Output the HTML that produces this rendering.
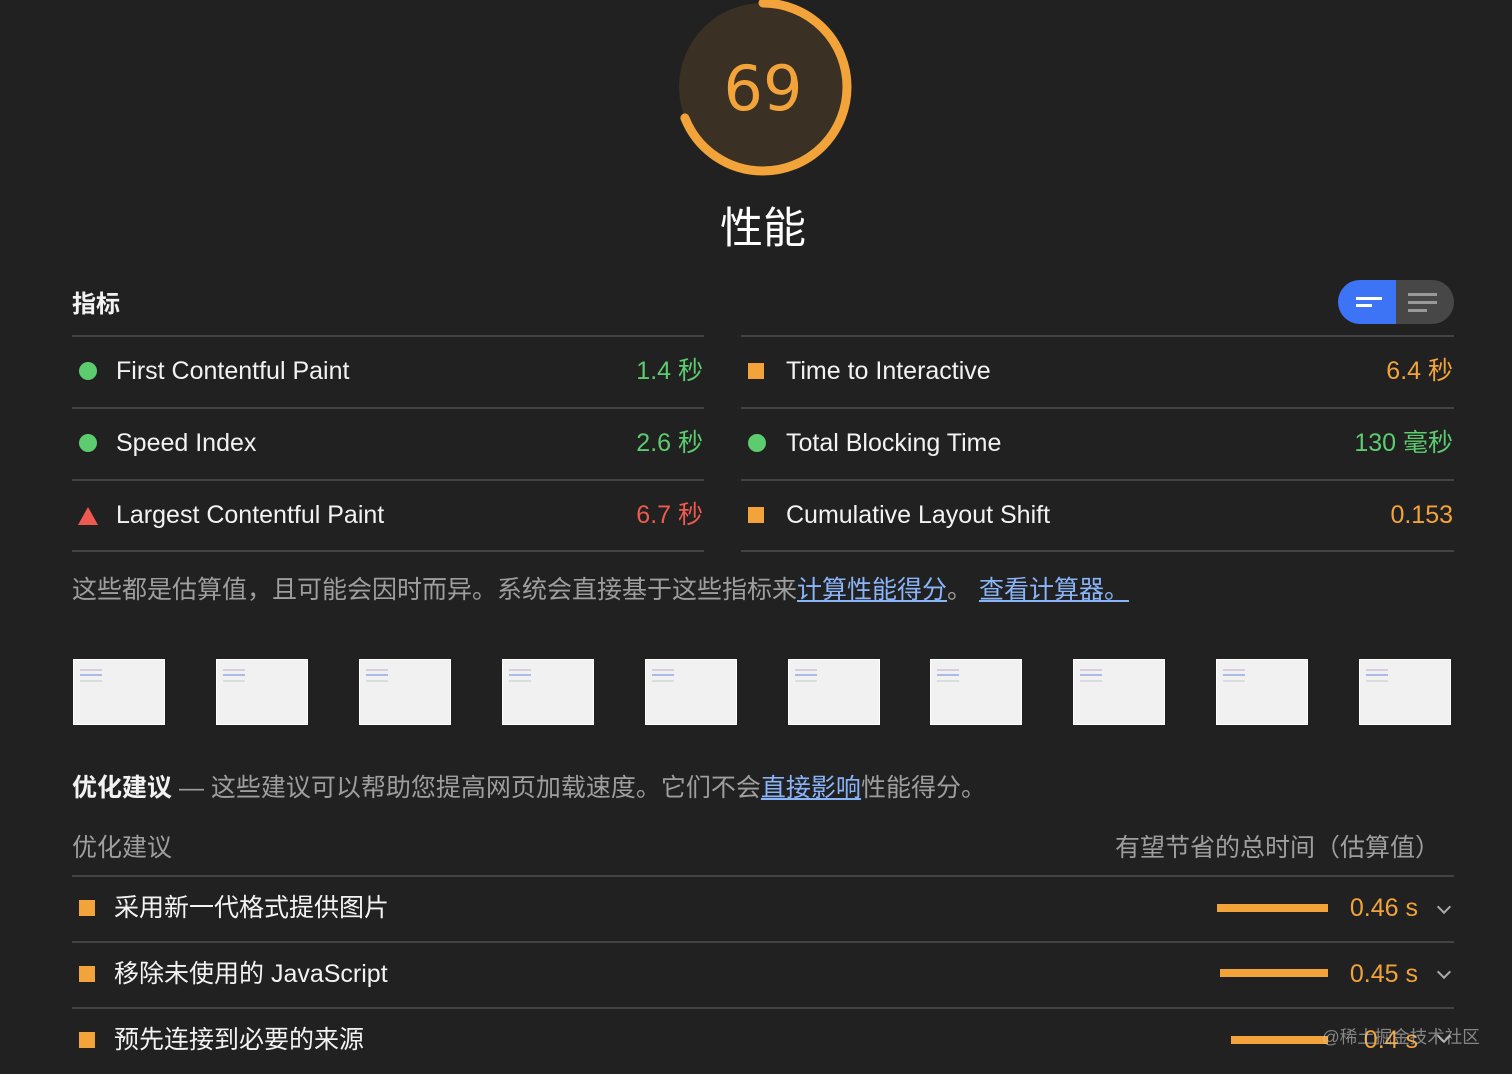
<!DOCTYPE html>
<html><head><meta charset="utf-8"><style>
body{margin:0;width:1512px;height:1074px;background:#212121;overflow:hidden;position:relative;font-family:"Liberation Sans","Noto Sans CJK SC",sans-serif;color:#e8e8e8}
.a{position:absolute;white-space:nowrap}
.hl{position:absolute;height:2px;background:#434343}
.m{font-size:25px;line-height:30px;color:#f2f2f2}
.v{font-size:25px;line-height:30px;text-align:right}
.g{color:#5ccc6f}.o{color:#f2a33a}.r{color:#ee5a4f}
.dot{position:absolute;width:18px;height:18px;border-radius:50%;background:#5ccc6f}
.sq{position:absolute;width:16px;height:16px;background:#f2a33a}
.tri{position:absolute;width:0;height:0;border-left:10px solid transparent;border-right:10px solid transparent;border-bottom:18px solid #ee5a4f}
.th{position:absolute;top:659px;width:90px;height:64px;background:#f1f1f1;border:1px solid #fff}
.th i{position:absolute;left:6px;top:4px;width:22px;height:24px;background:linear-gradient(#f1f1f1 0 5px,#d9cbe2 5px 7px,#f1f1f1 7px 10px,#a8bcea 10px 12px,#f1f1f1 12px 16px,#dcdcdc 16px 18px,#f1f1f1 18px)}
a{color:#8ab4f8;text-decoration:underline}
.bar{position:absolute;height:8px;background:#f2a33a}
.chev{position:absolute;width:8px;height:8px;border-right:2px solid #aaa;border-bottom:2px solid #aaa;transform:rotate(45deg)}
.t{font-size:25px;line-height:30px}
</style></head><body>
<svg class="a" style="left:670px;top:-6px" width="186" height="186" viewBox="0 0 186 186">
<circle cx="93" cy="93" r="84" fill="#3a3024"/>
<circle cx="93" cy="93" r="84" fill="none" stroke="#f2a33a" stroke-width="9" stroke-linecap="round" stroke-dasharray="364 600" transform="rotate(-90 93 93)"/>
</svg>
<div class="a" style="left:663px;top:52px;width:200px;text-align:center;font-size:62px;color:#f2a33a;font-family:'DejaVu Sans',sans-serif">69</div>
<div class="a" style="left:663px;top:194px;width:200px;text-align:center;font-size:43px;color:#fff">性能</div>

<div class="a" style="left:72px;top:290px;font-size:24px;line-height:30px;font-weight:bold;color:#f2f2f2">指标</div>
<div class="a" style="left:1338px;top:280px;width:58px;height:44px;background:#3d73f5;border-radius:22px 0 0 22px"></div>
<div class="a" style="left:1396px;top:280px;width:58px;height:44px;background:#474747;border-radius:0 22px 22px 0"></div>
<div class="a" style="left:1356px;top:297px;width:26px;height:3px;background:#fff"></div>
<div class="a" style="left:1356px;top:304px;width:16px;height:3px;background:#fff"></div>
<div class="a" style="left:1408px;top:293px;width:29px;height:3px;background:#999"></div>
<div class="a" style="left:1408px;top:301px;width:29px;height:3px;background:#999"></div>
<div class="a" style="left:1408px;top:309px;width:19px;height:3px;background:#999"></div>

<div class="hl" style="left:72px;top:335px;width:632px"></div><div class="hl" style="left:741px;top:335px;width:713px"></div>
<div class="hl" style="left:72px;top:407px;width:632px"></div><div class="hl" style="left:741px;top:407px;width:713px"></div>
<div class="hl" style="left:72px;top:479px;width:632px"></div><div class="hl" style="left:741px;top:479px;width:713px"></div>
<div class="hl" style="left:72px;top:550px;width:632px"></div><div class="hl" style="left:741px;top:550px;width:713px"></div>

<div class="dot" style="left:79px;top:362px"></div><div class="a m" style="left:116px;top:356px">First Contentful Paint</div><div class="a v g" style="right:809px;top:356px">1.4 秒</div>
<div class="dot" style="left:79px;top:434px"></div><div class="a m" style="left:116px;top:428px">Speed Index</div><div class="a v g" style="right:809px;top:428px">2.6 秒</div>
<div class="tri" style="left:78px;top:507px"></div><div class="a m" style="left:116px;top:500px">Largest Contentful Paint</div><div class="a v r" style="right:809px;top:500px">6.7 秒</div>
<div class="sq" style="left:748px;top:363px"></div><div class="a m" style="left:786px;top:356px">Time to Interactive</div><div class="a v o" style="right:59px;top:356px">6.4 秒</div>
<div class="dot" style="left:748px;top:434px"></div><div class="a m" style="left:786px;top:428px">Total Blocking Time</div><div class="a v g" style="right:59px;top:428px">130 毫秒</div>
<div class="sq" style="left:748px;top:507px"></div><div class="a m" style="left:786px;top:500px">Cumulative Layout Shift</div><div class="a v o" style="right:59px;top:500px">0.153</div>

<div class="a t" style="left:72px;top:575px;color:#9e9e9e">这些都是估算值，且可能会因时而异。系统会直接基于这些指标来<a>计算性能得分</a>。 <a>查看计算器。</a></div>

<div class="th" style="left:73px"><i></i></div><div class="th" style="left:216px"><i></i></div><div class="th" style="left:359px"><i></i></div><div class="th" style="left:502px"><i></i></div><div class="th" style="left:645px"><i></i></div><div class="th" style="left:788px"><i></i></div><div class="th" style="left:930px"><i></i></div><div class="th" style="left:1073px"><i></i></div><div class="th" style="left:1216px"><i></i></div><div class="th" style="left:1359px"><i></i></div>

<div class="a t" style="left:72px;top:773px;color:#9e9e9e"><b style="color:#f2f2f2">优化建议</b> — 这些建议可以帮助您提高网页加载速度。它们不会<a>直接影响</a>性能得分。</div>
<div class="a t" style="left:72px;top:833px;color:#9e9e9e">优化建议</div>
<div class="a t" style="right:72px;top:833px;color:#9e9e9e">有望节省的总时间（估算值）</div>
<div class="hl" style="left:72px;top:875px;width:1382px"></div>
<div class="hl" style="left:72px;top:941px;width:1382px"></div>
<div class="hl" style="left:72px;top:1007px;width:1382px"></div>

<div class="sq" style="left:79px;top:900px"></div><div class="a m" style="left:114px;top:893px">采用新一代格式提供图片</div>
<div class="bar" style="left:1217px;top:904px;width:111px"></div><div class="a v o" style="right:94px;top:893px">0.46 s</div><div class="chev" style="left:1439px;top:902px"></div>
<div class="sq" style="left:79px;top:966px"></div><div class="a m" style="left:114px;top:959px">移除未使用的 JavaScript</div>
<div class="bar" style="left:1220px;top:969px;width:108px"></div><div class="a v o" style="right:94px;top:959px">0.45 s</div><div class="chev" style="left:1439px;top:967px"></div>
<div class="sq" style="left:79px;top:1032px"></div><div class="a m" style="left:114px;top:1025px">预先连接到必要的来源</div>
<div class="bar" style="left:1231px;top:1036px;width:97px"></div><div class="a v o" style="right:94px;top:1025px">0.4 s</div><div class="chev" style="left:1439px;top:1031px"></div>
<div class="a" style="left:1322px;top:1024px;font-size:17.5px;color:rgba(200,200,200,0.6)">@稀土掘金技术社区</div>
</body></html>
